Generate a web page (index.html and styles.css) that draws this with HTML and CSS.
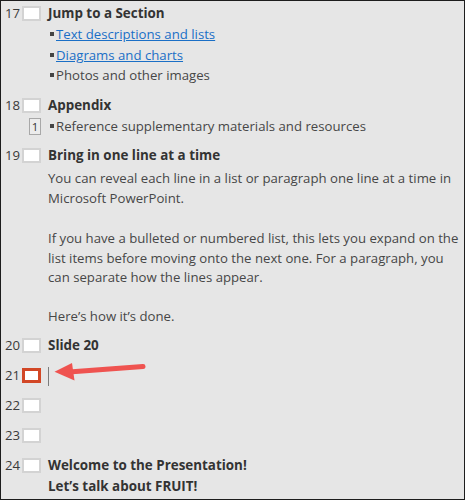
FILE: index.html
```html
<!DOCTYPE html>
<html>
<head>
	<meta charset="utf-8"/>
	<title>Outline</title>
	<link rel="stylesheet" href="styles.css">
</head>
<body>
<div class="outline">
	<div class="slide">
		<span class="num">17</span><span class="thumb"></span>
		<div class="title">Jump to a Section</div>
		<div class="bullet"><a href="#">Text descriptions and lists</a></div>
		<div class="bullet"><a href="#">Diagrams and charts</a></div>
		<div class="bullet">Photos and other images</div>
	</div>

	<div class="slide">
		<span class="num">18</span><span class="thumb"></span>
		<div class="title">Appendix</div>
		<span class="level">1</span>
		<div class="bullet">Reference supplementary materials and resources</div>
	</div>

	<div class="slide">
		<span class="num">19</span><span class="thumb"></span>
		<div class="title">Bring in one line at a time</div>
		<div class="para first">You can reveal each line in a list or paragraph one line at a time in Microsoft PowerPoint.</div>
		<div class="para">If you have a bulleted or numbered list, this lets you expand on the list items before moving onto the next one. For a paragraph, you can separate how the lines appear.</div>
		<div class="para last">Here’s how it’s done.</div>
	</div>

	<div class="slide">
		<span class="num">20</span><span class="thumb"></span>
		<div class="title">Slide 20</div>
	</div>

	<div class="slide">
		<span class="num">21</span><span class="thumb active"></span>
		<div class="title"><span class="caret"></span></div>
	</div>

	<div class="slide">
		<span class="num">22</span><span class="thumb"></span>
		<div class="title"></div>
	</div>

	<div class="slide">
		<span class="num">23</span><span class="thumb"></span>
		<div class="title"></div>
	</div>

	<div class="slide">
		<span class="num">24</span><span class="thumb"></span>
		<div class="title">Welcome to the Presentation!<br>Let’s talk about FRUIT!</div>
	</div>

	<!-- callout arrow pointing at the new slide -->
	<svg class="arrow" width="100" height="28" viewBox="0 0 100 28">
		<line x1="19" y1="14" x2="93" y2="8.5" stroke="#ef5350" stroke-width="5" stroke-linecap="round"/>
		<polygon points="4.5,13.8 22,5 24.5,22.5" fill="#ef5350"/>
	</svg>
</div>
</body>
</html>
```

FILE: styles.css
```css
body{
	margin: 0;
}
*{
	font-family: "Open Sans", "Noto Sans", sans-serif;
}

.outline{
	position: relative;
	height: 500px;
	box-sizing: border-box;
	border: 1px solid #1d1d1d;
	background: #e6e6e6;
	padding-top: 2px;
	overflow: hidden;
}

.slide{
	display: grid;
	grid-template-columns: 21px 19px 7px 1fr;
	margin-bottom: 9px;
}

.num{
	grid-column: 1;
	text-align: right;
	padding-right: 2px;
	font-size: 13.2px;
	line-height: 21px;
	color: #3a3a3a;
}
.thumb{
	grid-column: 2;
	align-self: start;
	width: 19px;
	height: 15px;
	margin-top: 3px;
	box-sizing: border-box;
	border: 2px solid #d3d3d3;
	background: #fff;
}
.thumb.active{
	border: 3px solid #d24726;
}

.title{
	grid-column: 4;
	font-size: 13.4px;
	font-weight: bold;
	line-height: 21px;
	min-height: 21px;
	color: #333;
}

.level{
	grid-column: 2;
	justify-self: end;
	align-self: start;
	width: 12px;
	height: 17px;
	margin-top: 2px;
	box-sizing: border-box;
	border: 1px solid #a8a8a8;
	background: #ececec;
	text-align: center;
	font-size: 11.5px;
	line-height: 15px;
	color: #333;
}

.bullet{
	grid-column: 4;
	font-size: 13.2px;
	line-height: 20.5px;
	color: #474747;
}
.bullet::before{
	content: "";
	display: inline-block;
	width: 4px;
	height: 4px;
	margin: 0 2px;
	vertical-align: 3px;
	background: #444;
}
.bullet a{
	color: #1a6fc6;
}

.para{
	grid-column: 4;
	font-size: 13.2px;
	line-height: 19.5px;
	color: #474747;
	margin-top: 21px;
	padding-right: 2px;
}
.para.first{
	margin-top: 3px;
}
.para.last{
	margin-top: 19px;
}

.caret{
	display: inline-block;
	width: 1px;
	height: 19px;
	margin-top: 2px;
	vertical-align: top;
	background: #7c7c7c;
}

.arrow{
	position: absolute;
	left: 49px;
	top: 357px;
}
```
